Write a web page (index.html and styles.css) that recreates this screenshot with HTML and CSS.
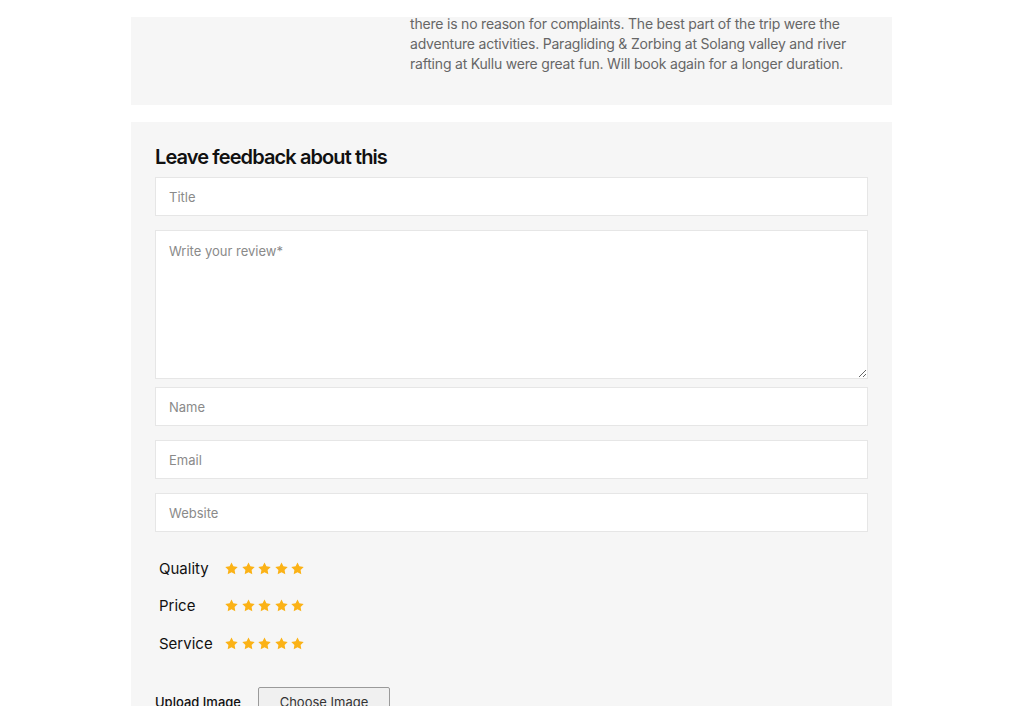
FILE: index.html
```html
<!DOCTYPE html>
<html lang="en">

<head>
    <meta charset="UTF-8">
    <meta name="viewport" content="width=device-width, initial-scale=1.0">
    <title>Reviews</title>
    <link rel="stylesheet" href="styles.css">
</head>

<body>
    <svg width="0" height="0" class="defs">
        <defs>
            <path id="star" d="M6.5 0.4 L8.4 4.3 L12.7 4.9 L9.6 7.9 L10.3 12.2 L6.5 10.2 L2.7 12.2 L3.4 7.9 L0.3 4.9 L4.6 4.3 Z" />
        </defs>
    </svg>
    <div class="frame">
        <div class="review-box">
            <div class="review-side"></div>
            <p class="review-text">there is no reason for complaints. The best part of the trip were the adventure activities. Paragliding &amp; Zorbing at Solang valley and river rafting at Kullu were great fun. Will book again for a longer duration.</p>
        </div>

        <form class="feedback-box">
            <h3 class="feedback-title">Leave feedback about this</h3>
            <input class="field" type="text" placeholder="Title">
            <textarea class="field field-area" placeholder="Write your review*"></textarea>
            <input class="field" type="text" placeholder="Name">
            <input class="field" type="email" placeholder="Email">
            <input class="field" type="text" placeholder="Website">

            <div class="ratings">
                <div class="rating-row">
                    <span class="rating-label">Quality</span>
                    <span class="stars">
                        <svg viewBox="0 0 13 13"><use href="#star" /></svg>
                        <svg viewBox="0 0 13 13"><use href="#star" /></svg>
                        <svg viewBox="0 0 13 13"><use href="#star" /></svg>
                        <svg viewBox="0 0 13 13"><use href="#star" /></svg>
                        <svg viewBox="0 0 13 13"><use href="#star" /></svg>
                    </span>
                </div>
                <div class="rating-row">
                    <span class="rating-label">Price</span>
                    <span class="stars">
                        <svg viewBox="0 0 13 13"><use href="#star" /></svg>
                        <svg viewBox="0 0 13 13"><use href="#star" /></svg>
                        <svg viewBox="0 0 13 13"><use href="#star" /></svg>
                        <svg viewBox="0 0 13 13"><use href="#star" /></svg>
                        <svg viewBox="0 0 13 13"><use href="#star" /></svg>
                    </span>
                </div>
                <div class="rating-row">
                    <span class="rating-label">Service</span>
                    <span class="stars">
                        <svg viewBox="0 0 13 13"><use href="#star" /></svg>
                        <svg viewBox="0 0 13 13"><use href="#star" /></svg>
                        <svg viewBox="0 0 13 13"><use href="#star" /></svg>
                        <svg viewBox="0 0 13 13"><use href="#star" /></svg>
                        <svg viewBox="0 0 13 13"><use href="#star" /></svg>
                    </span>
                </div>
            </div>

            <div class="upload-row">
                <label class="upload-label">Upload Image</label>
                <button type="button" class="upload-btn">Choose Image</button>
            </div>
        </form>
    </div>
</body>

</html>
```

FILE: styles.css
```css
body {
    margin: 0;
    padding-top: 17px;
    background: #ffffff;
    font-family: Inter, "Open Sans", sans-serif;
}

.defs {
    position: absolute;
}

/* visible part of the page */
.frame {
    width: 761px;
    margin: 0 0 0 131px;
    height: 689px;
    overflow: hidden;
}

.review-box {
    display: flex;
    background: #f6f6f6;
    padding: 0 24px 31px 24px;
}

.review-side {
    width: 255px;
    flex: none;
}

.review-text {
    margin: -3px 0 0 0;
    font-size: 14px;
    line-height: 20px;
    color: #666666;
    letter-spacing: -0.2px;
}

.feedback-box {
    margin-top: 17px;
    background: #f6f6f6;
    padding: 24px 24px 40px 24px;
}

.feedback-title {
    margin: 0 0 9px 0;
    font-size: 20px;
    line-height: 22px;
    font-weight: 600;
    letter-spacing: -0.9px;
    color: #111111;
}

.field {
    display: block;
    box-sizing: border-box;
    width: 100%;
    height: 39px;
    margin-bottom: 14px;
    padding: 0 13px;
    border: 1px solid #e6e6e6;
    background: #ffffff;
    font-family: inherit;
    font-size: 13px;
    color: #333333;
    outline: none;
}

.field::placeholder {
    color: #8a8a8a;
}

.field-area {
    height: 149px;
    margin-bottom: 8px;
    padding-top: 12px;
    resize: vertical;
}

.ratings {
    padding: 12px 0 0 4px;
}

.rating-row {
    display: flex;
    align-items: center;
    height: 20px;
    margin-bottom: 17.5px;
}

.rating-label {
    width: 66px;
    font-size: 15px;
    color: #111111;
}

.stars {
    display: flex;
    gap: 3.5px;
}

.stars svg {
    width: 13px;
    height: 13px;
    fill: #fbb216;
}

.upload-row {
    display: flex;
    align-items: center;
    gap: 17px;
    margin-top: 34px;
}

.upload-label {
    font-size: 13px;
    font-weight: 500;
    color: #111111;
}

.upload-btn {
    width: 132px;
    height: 30px;
    border: 1px solid #9a9a9a;
    border-radius: 2px;
    background: #f0f0f0;
    font-family: inherit;
    font-size: 13px;
    color: #333333;
}
```
